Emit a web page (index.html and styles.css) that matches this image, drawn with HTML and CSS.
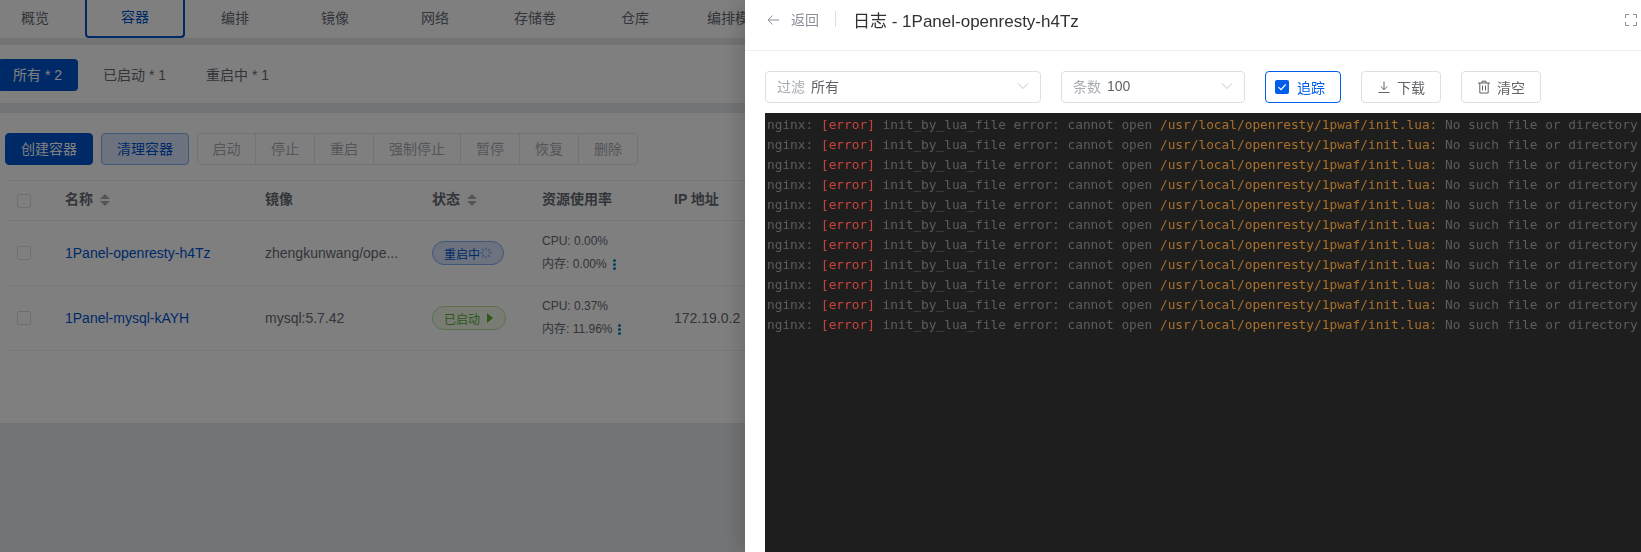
FILE: index.html
```html
<!DOCTYPE html>
<html lang="zh-CN">
<head>
<meta charset="utf-8">
<title>容器日志</title>
<link rel="stylesheet" href="styles.css">
</head>
<body>
<div class="page">
  <nav class="tabs card">
    <a class="tab">概览</a>
    <a class="tab active">容器</a>
    <a class="tab">编排</a>
    <a class="tab">镜像</a>
    <a class="tab">网络</a>
    <a class="tab">存储卷</a>
    <a class="tab">仓库</a>
    <a class="tab">编排模板</a>
  </nav>
  <div class="filters card">
    <span class="pill on">所有 * 2</span>
    <span class="pill">已启动 * 1</span>
    <span class="pill">重启中 * 1</span>
  </div>
  <section class="main card">
    <div class="toolbar">
      <button class="btn primary">创建容器</button>
      <button class="btn plain">清理容器</button>
      <div class="btn-group">
        <button class="seg">启动</button><button class="seg">停止</button><button class="seg">重启</button><button class="seg">强制停止</button><button class="seg">暂停</button><button class="seg">恢复</button><button class="seg">删除</button>
      </div>
    </div>
    <table class="table">
      <colgroup><col class="c1"><col class="c2"><col class="c3"><col class="c4"><col class="c5"><col class="c6"></colgroup>
      <thead>
        <tr>
          <th><span class="cb"></span></th>
          <th>名称<span class="sort"></span></th>
          <th>镜像</th>
          <th>状态<span class="sort"></span></th>
          <th>资源使用率</th>
          <th>IP 地址</th>
        </tr>
      </thead>
      <tbody>
        <tr>
          <td><span class="cb"></span></td>
          <td><a class="link">1Panel-openresty-h4Tz</a></td>
          <td><div class="clip">zhengkunwang/ope...</div></td>
          <td><span class="badge blue">重启中<svg class="spin" viewBox="0 0 12 12" width="12" height="12"><g fill="none" stroke="currentColor" stroke-width="1.5"><path d="M6 .5v2.6M6 8.9v2.6M.5 6h2.6M8.9 6h2.6M2.1 2.1L4 4M8 8l1.9 1.9M2.1 9.9L4 8M8 4l1.9-1.9"/></g></svg></span></td>
          <td class="res"><div>CPU: 0.00%</div><div>内存: 0.00%<span class="more"><i></i><i></i><i></i></span></div></td>
          <td></td>
        </tr>
        <tr>
          <td><span class="cb"></span></td>
          <td><a class="link">1Panel-mysql-kAYH</a></td>
          <td><div class="clip">mysql:5.7.42</div></td>
          <td><span class="badge green">已启动<svg class="play" viewBox="0 0 8 12" width="8" height="12"><path d="M1 1l6 5-6 5z" fill="currentColor"/></svg></span></td>
          <td class="res"><div>CPU: 0.37%</div><div>内存: 11.96%<span class="more"><i></i><i></i><i></i></span></div></td>
          <td>172.19.0.2</td>
        </tr>
      </tbody>
    </table>
  </section>
</div>
<div class="overlay"></div>
<aside class="drawer">
  <header class="drawer-head">
    <svg class="back" viewBox="0 0 14 14" width="14" height="14"><path d="M13 7H2M6.500 2.500L2 7l4.500 4.500" fill="none" stroke="currentColor" stroke-width="1"/></svg>
    <span class="back-text">返回</span>
    <span class="vline"></span>
    <h1 class="title">日志 - 1Panel-openresty-h4Tz</h1>
    <svg class="full" viewBox="0 0 12 12" width="12" height="12"><path d="M.5 4V.5H4M8 .5h3.500V4M11.500 8v3.500H8M4 11.500H.5V8" fill="none" stroke="currentColor" stroke-width="1"/></svg>
  </header>
  <div class="controls">
    <div class="select s-long"><span class="prefix">过滤</span><span class="value">所有</span><svg class="chev" viewBox="0 0 12 8" width="12" height="8"><path d="M1 1.500l5 5 5-5" fill="none" stroke="currentColor" stroke-width="1"/></svg></div>
    <div class="select s-short"><span class="prefix">条数</span><span class="value">100</span><svg class="chev" viewBox="0 0 12 8" width="12" height="8"><path d="M1 1.500l5 5 5-5" fill="none" stroke="currentColor" stroke-width="1"/></svg></div>
    <label class="follow"><span class="checked"><svg viewBox="0 0 14 14" width="14" height="14"><path d="M3.500 7.200l2.500 2.500 4.700-5.200" fill="none" stroke="#fff" stroke-width="1.200"/></svg></span>追踪</label>
    <button class="action"><svg viewBox="0 0 14 14" width="14" height="14"><path d="M1.500 12.500h11M7 1.500v8M3.800 6.500L7 9.700l3.200-3.200" fill="none" stroke="currentColor" stroke-width="1"/></svg>下载</button>
    <button class="action"><svg viewBox="0 0 14 14" width="14" height="14"><path d="M1 3h12M5 3V1.200h4V3M2.800 3v10h8.400V3M5.500 5.500v5M8.500 5.500v5" fill="none" stroke="currentColor" stroke-width="1"/></svg>清空</button>
  </div>
  <div class="log">
    <div>nginx: <b>[error]</b> init_by_lua_file error: cannot open <em>/usr/local/openresty/1pwaf/init.lua:</em> No such file or directory</div>
    <div>nginx: <b>[error]</b> init_by_lua_file error: cannot open <em>/usr/local/openresty/1pwaf/init.lua:</em> No such file or directory</div>
    <div>nginx: <b>[error]</b> init_by_lua_file error: cannot open <em>/usr/local/openresty/1pwaf/init.lua:</em> No such file or directory</div>
    <div>nginx: <b>[error]</b> init_by_lua_file error: cannot open <em>/usr/local/openresty/1pwaf/init.lua:</em> No such file or directory</div>
    <div>nginx: <b>[error]</b> init_by_lua_file error: cannot open <em>/usr/local/openresty/1pwaf/init.lua:</em> No such file or directory</div>
    <div>nginx: <b>[error]</b> init_by_lua_file error: cannot open <em>/usr/local/openresty/1pwaf/init.lua:</em> No such file or directory</div>
    <div>nginx: <b>[error]</b> init_by_lua_file error: cannot open <em>/usr/local/openresty/1pwaf/init.lua:</em> No such file or directory</div>
    <div>nginx: <b>[error]</b> init_by_lua_file error: cannot open <em>/usr/local/openresty/1pwaf/init.lua:</em> No such file or directory</div>
    <div>nginx: <b>[error]</b> init_by_lua_file error: cannot open <em>/usr/local/openresty/1pwaf/init.lua:</em> No such file or directory</div>
    <div>nginx: <b>[error]</b> init_by_lua_file error: cannot open <em>/usr/local/openresty/1pwaf/init.lua:</em> No such file or directory</div>
    <div>nginx: <b>[error]</b> init_by_lua_file error: cannot open <em>/usr/local/openresty/1pwaf/init.lua:</em> No such file or directory</div>
  </div>
</aside>
</body>
</html>
```

FILE: styles.css
```css
* { box-sizing: border-box; }
html, body { margin: 0; height: 100%; overflow: hidden; }
body {
  background: #e7e8ec;
  color: #646a73;
  font: 14px "Liberation Sans", "Noto Sans CJK SC", sans-serif;
}
button { font: inherit; cursor: pointer; }

.page { display: flex; flex-direction: column; width: 1641px; }
.card { background: #fff; }

.tabs { display: flex; height: 38px; margin-left: -15px; width: 1656px; flex: none; }
.tab { width: 100px; flex: none; display: flex; align-items: center; justify-content: center; height: 38px; padding-bottom: 4px; white-space: nowrap; }
.tab.active { color: #0052d0; border: 2px solid #0052d0; border-top: 0; border-radius: 0 0 4px 4px; }

.filters { display: flex; height: 58px; margin-top: 7px; align-items: center; padding-top: 2px; }
.pill { height: 32px; line-height: 32px; padding: 0 15px; width: 108px; white-space: nowrap; }
.pill + .pill { padding-left: 25px; width: 103px; }
.pill.on { background: #0052d0; color: #fff; width: 80px; margin-left: -2px; border-radius: 4px; }

.main { margin-top: 10px; height: 310px; padding: 20px 0 0 5px; }
.toolbar { display: flex; height: 32px; gap: 8px; }
.btn { height: 32px; width: 88px; padding: 0 0 2px; border: 1px solid #0052d0; border-radius: 4px; }
.btn.primary { background: #0052d0; color: #fff; }
.btn.plain { background: #d9e7fc; color: #0052d0; border-color: #80aef5; }
.btn-group { display: flex; }
.seg { height: 32px; width: 60px; padding: 0 0 2px; background: #fff; color: #a8abb2; border: 1px solid #e4e7ed; margin-left: -1px; }
.seg:first-child { width: 59px; margin-left: 0; border-radius: 4px 0 0 4px; }
.seg:last-child { border-radius: 0 4px 4px 0; }
.seg:nth-child(4) { width: 88px; }

.table { border-collapse: collapse; table-layout: fixed; margin-top: 15px; width: 800px; border-top: 1px solid #ebeef5; }
.c1 { width: 48px; } .c2 { width: 200px; } .c3 { width: 167px; } .c4 { width: 110px; } .c5 { width: 132px; } .c6 { width: 144px; }
th, td { padding: 0 12px; text-align: left; border-bottom: 1px solid #ebeef5; white-space: nowrap; }
th { height: 40px; font-weight: bold; color: #646a73; padding-bottom: 6px; }
td { height: 65px; color: #646a73; }
th:first-child, td:first-child { padding: 0 0 0 12px; }
.cb { display: block; width: 14px; height: 14px; border: 1px solid #dcdfe6; border-radius: 2px; background: #fff; }
.sort { display: inline-block; vertical-align: middle; margin-left: 7px; width: 10px; height: 14px; position: relative; }
.sort::before, .sort::after { content: ""; position: absolute; left: 0; border: 5px solid transparent; }
.sort::before { top: -4px; border-bottom-color: #a8abb2; }
.sort::after { bottom: -4px; border-top-color: #a8abb2; }
.link { color: #0052d0; }
.clip { width: 141px; }
.badge { display: inline-flex; align-items: center; height: 24px; padding: 0 11px; border-radius: 12px; font-size: 12px; border: 1px solid; vertical-align: middle; }
.badge svg { flex: none; }
.blue { color: #0052d0; background: #d9e7fc; border-color: #80aef5; }
.green { color: #5cb030; background: #f0f9eb; border-color: #b3e19d; }
.spin { color: #80aef5; }
.play { margin-left: 6px; }
.res { font-size: 12px; line-height: 23px; }
.more { display: inline-flex; flex-direction: column; gap: 1px; margin-left: 6px; vertical-align: middle; }
.more i { display: block; width: 3px; height: 3px; border-radius: 50%; background: #0b7fc0; }

.overlay { position: fixed; inset: 0; background: rgba(0,0,0,.5); }
.drawer { position: fixed; top: 0; bottom: 0; left: 745px; width: 896px; background: #fff; box-shadow: -8px 0 16px rgba(0,0,0,.12); display: flex; flex-direction: column; }
.drawer-head { display: flex; align-items: center; height: 51px; padding: 0 4px 12px 21px; border-bottom: 1px solid #ebeef5; flex: none; }
.back { color: #8a8f98; flex: none; margin-top: 2px; }
.back-text { margin-left: 11px; color: #8a8f98; }
.vline { width: 1px; height: 16px; background: #dcdfe6; margin: 0 17px 0 16px; }
.title { margin: 0; font-size: 17px; font-weight: normal; color: #303133; }
.full { margin-left: auto; color: #8a8f98; margin-top: 2px; }
.controls { display: flex; gap: 20px; padding: 20px 0 0 20px; height: 62px; flex: none; }
.select { display: flex; align-items: center; height: 32px; border: 1px solid #dcdfe6; border-radius: 4px; padding: 0 11px 2px; }
.s-long { width: 276px; } .s-short { width: 184px; }
.prefix { color: #a8abb2; margin-right: 6px; }
.value { color: #606266; }
.chev { margin-left: auto; color: #c0c4cc; }
.follow { display: flex; align-items: center; width: 76px; height: 32px; border: 1px solid #005eeb; border-radius: 4px; padding: 0 0 1px 9px; color: #005eeb; }
.checked { display: block; width: 14px; height: 14px; border-radius: 2px; background: #005eeb; margin-right: 8px; }
.checked svg { display: block; }
.action { display: flex; align-items: center; justify-content: center; gap: 6px; width: 80px; height: 32px; padding: 0 0 1px; background: #fff; border: 1px solid #dcdfe6; border-radius: 4px; color: #606266; }
.action svg { flex: none; }
.log { flex: 1; margin-left: 20px; background: #1e1e1e; color: #5c5c5c; padding: 2px 0 0 2px; font: 12.81px/20px "DejaVu Sans Mono", monospace; white-space: nowrap; overflow: hidden; }
.log b { font-weight: normal; color: #c8443a; }
.log em { font-style: normal; color: #a8702a; }
```
